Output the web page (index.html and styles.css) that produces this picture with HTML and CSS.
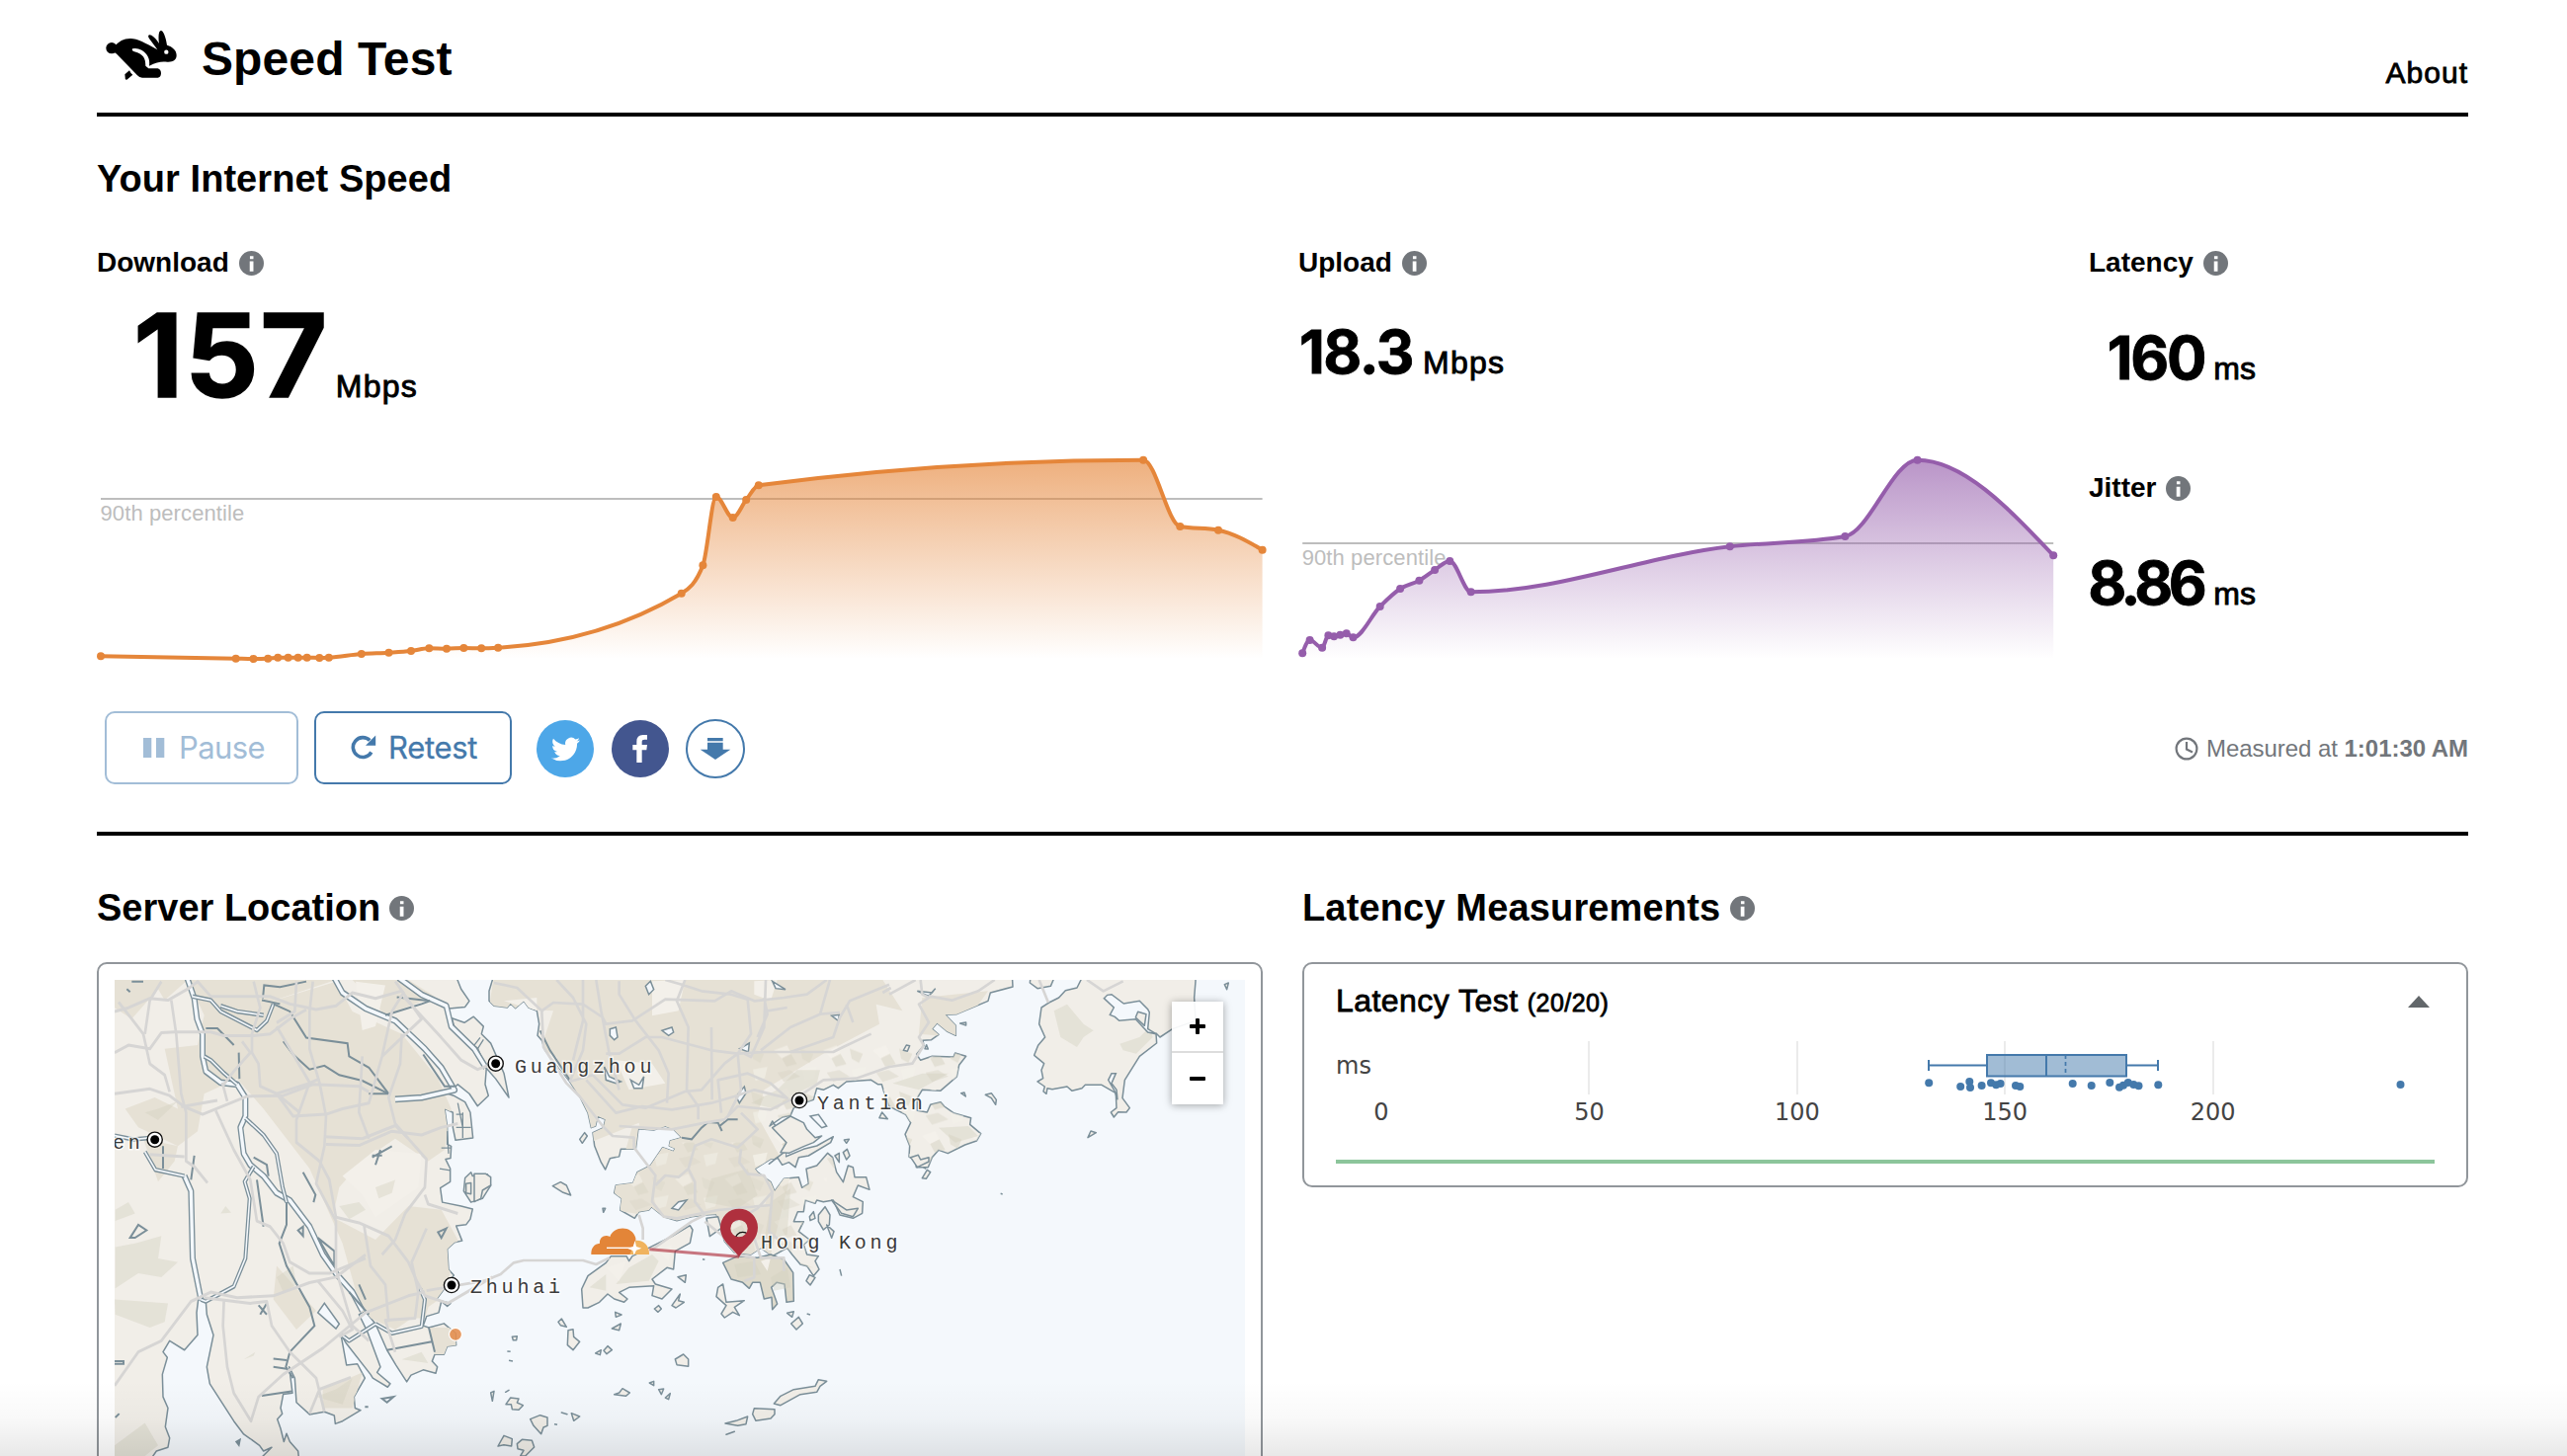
FILE: index.html
```html
<!DOCTYPE html>
<html lang="en">
<head>
<meta charset="utf-8">
<title>Speed Test</title>
<link rel="stylesheet" href="styles.css">
</head>
<body>
<svg width="0" height="0" class="defs">
  <symbol id="info" viewBox="0 0 24 24"><circle cx="12" cy="12" r="12" fill="#72767b"/><path d="M10.5 5h3.4v3h-3.4zM10.3 10.2h3.6V20h-3.6z" fill="#fff"/></symbol>
  <symbol id="city" viewBox="-9 -9 18 18"><circle r="7.6" fill="#fff" stroke="#111" stroke-width="1.4"/><circle r="4.5" fill="#000"/></symbol>
</svg>
<div class="page">
  <header class="header">
    <svg class="rabbit" viewBox="54 60 318 174">
      <circle cx="99" cy="116" r="17"/>
      <path d="M108 110C122 96 134 87 156 87C178 87 200 100 238 121L213 87C207 77 212 73 220 77Q232 84 243 102C241 86 241 70 245 65Q249 61 254 66C260 74 265 92 267 107C284 112 296 123 296 138C296 152 285 159 268 158C250 156 236 158 213 170C216 151 209 133 190 122Q176 115 162 118C160 122 162 125 168 127C196 134 202 148 202 170L211 178H239Q249 181 249 193Q248 206 239 206H192Q183 206 177 199L116 136Q112 132 108 130Z"/>
      <path d="M139 196L153 184Q156 192 163 197L145 212Q139 214 140 205Z"/>
      <circle cx="265" cy="128" r="6.5" fill="#fff"/>
    </svg>
    <h1 class="brand">Speed Test</h1>
    <a class="about">About</a>
  </header>

  <section class="speed">
    <h2 class="heading">Your Internet Speed</h2>
    <div class="metrics">
      <div class="metric">
        <div class="label">Download <svg class="info"><use href="#info"/></svg></div>
        <div class="value value-xl"><span class="num">157</span><span class="unit">Mbps</span></div>
        <svg class="chart chart-down" id="down" viewBox="98 450 1184 230"></svg>
      </div>
      <div class="metric">
        <div class="label">Upload <svg class="info"><use href="#info"/></svg></div>
        <div class="value value-up"><span class="num">18.3</span><span class="unit">Mbps</span></div>
        <svg class="chart chart-up" id="up" viewBox="1314 450 768 230"></svg>
      </div>
      <div class="metric metric-side">
        <div class="label">Latency <svg class="info"><use href="#info"/></svg></div>
        <div class="value value-lat"><span class="num">160</span><span class="unit">ms</span></div>
        <div class="label jitter">Jitter <svg class="info"><use href="#info"/></svg></div>
        <div class="value value-lat value-jit"><span class="num">8.86</span><span class="unit">ms</span></div>
      </div>
    </div>
    <div class="toolbar">
      <button class="btn btn-pause"><svg width="22" height="20" viewBox="0 0 22 20"><path d="M0 0h8.3v20H0zM13 0h8.3v20H13z"/></svg>Pause</button>
      <button class="btn btn-retest"><svg width="26" height="26" viewBox="0 0 26 26"><path d="M20.8 17.500A9.900 9.900 0 1 1 19.300 5.600" fill="none" stroke="#4479ab" stroke-width="3.600"/><path d="M25.2.6V10.8H15z"/></svg>Retest</button>
      <div class="social">
        <a class="round tw"><svg width="29" height="29" viewBox="0 0 24 24"><path fill="#fff" d="M23.953 4.57a10 10 0 01-2.825.775 4.958 4.958 0 002.163-2.723c-.951.555-2.005.959-3.127 1.184a4.92 4.92 0 00-8.384 4.482C7.69 8.095 4.067 6.13 1.64 3.162a4.822 4.822 0 00-.666 2.475c0 1.71.87 3.213 2.188 4.096a4.904 4.904 0 01-2.228-.616v.06a4.923 4.923 0 003.946 4.827 4.996 4.996 0 01-2.212.085 4.936 4.936 0 004.604 3.417 9.867 9.867 0 01-6.102 2.105c-.39 0-.779-.023-1.17-.067a13.995 13.995 0 007.557 2.209c9.053 0 13.998-7.496 13.998-13.985 0-.21 0-.42-.015-.63A9.935 9.935 0 0024 4.59z"/></svg></a>
        <a class="round fb"><svg width="58" height="58" viewBox="267 33 174 174"><path fill="#fff" d="M343 162V124H331V108H343V98Q343 78 362 78H375V92H367Q359 92 359 99V108H375L373 124H359V162Z"/></svg></a>
        <a class="round dl"><svg width="54" height="54" viewBox="501 39 162 162"><path fill="#4479ab" d="M558 87H605V97H558ZM558 101H605V122H628L582 153L536 122H558Z"/></svg></a>
      </div>
      <div class="measured"><svg width="24" height="24" viewBox="0 0 24 24"><circle cx="12" cy="12" r="10.4"/><path d="M12 5v7.5l6 3"/></svg><span>Measured at <b>1:01:30 AM</b></span></div>
    </div>
  </section>

  <hr class="rule">

  <section class="details">
    <div>
      <h2 class="heading">Server Location <svg class="info"><use href="#info"/></svg></h2>
      <div class="card map-card">
        <div class="map-box">
        <svg class="map" viewBox="116 992 1144 482">
          <defs>
            <pattern id="hills" width="150" height="130" patternUnits="userSpaceOnUse">
              <path d="M10 20L50 5L62 30L34 44Z" fill="#f6f3ec" opacity=".6"/>
              <path d="M34 44L62 30L80 62L48 70Z" fill="#d6d2c2" opacity=".5"/>
              <path d="M90 15L130 30L118 58L96 46Z" fill="#dcd8c9" opacity=".6"/>
              <path d="M96 78L140 70L132 104L104 112Z" fill="#f4f1ea" opacity=".6"/>
              <path d="M20 88L58 80L90 100L40 116Z" fill="#dad6c7" opacity=".5"/>
            </pattern>
            <clipPath id="mid-clip"><use href="#mid"/></clipPath>
            <clipPath id="west-clip"><use href="#west"/></clipPath>
          </defs>
          <rect x="116" y="992" width="1144" height="482" fill="#f4f8fc"/>

          <!-- western delta -->
          <g transform="translate(80 880) scale(.33333 .37879)">
            <path id="west" class="land" d="M90 280H1142L1160 320L1185 352L1172 368L1115 373L1130 420L1165 455L1210 490L1237 530L1233 575L1243 605L1210 633L1185 600L1150 575L1120 600L1140 606L1172 622L1188 650L1196 718L1143 724L1135 690L1135 650L1110 640L1118 690V735L1130 740L1128 772L1113 775L1127 800V835L1097 852L1103 890L1160 900L1195 908L1188 935L1175 950L1145 953L1163 993L1140 997L1118 1015L1122 1070L1138 1085L1110 1120L1085 1150L1128 1160L1118 1168L1100 1155L1092 1185L1055 1195L1045 1220L1062 1225L1108 1214L1143 1240L1145 1272L1118 1275L1108 1297L1080 1297L1072 1315L1088 1330L1083 1347L1045 1338L1008 1352L995 1370L962 1325L935 1285L900 1215L868 1180L850 1190L875 1235L915 1330L905 1345L945 1375L937 1384L892 1360L885 1350L812 1268L795 1243L812 1325L845 1322L868 1360L835 1410L838 1440L855 1446L800 1475L778 1482L775 1460L745 1450L700 1457L660 1425L655 1360L638 1330L648 1400L620 1403L612 1440L617 1455L602 1470L612 1495L622 1530L630 1508L640 1530L665 1555L668 1580H545L585 1545L560 1555L548 1540L520 1522L500 1510L470 1475L397 1375L388 1330L408 1245L388 1190L385 1155L362 1150L357 1185L360 1245L320 1285L275 1260L255 1290L268 1305L253 1350L255 1410L270 1440L262 1490L275 1520L270 1545L235 1555L215 1580H90Z"/>
            <g clip-path="url(#west-clip)">
              <path class="dark" d="M108 296H330L260 350L240 320L160 400L108 370ZM380 390L470 400L560 360L780 300L830 380L980 440L1090 560L1130 640L1110 750L1060 780L960 720L860 780L790 850L770 930L900 990L1000 900L1100 910L1150 990L1110 1140L960 1230L860 1190L800 1000L700 800L560 640L480 560L380 600L360 700L300 740L180 690L140 640L230 610L300 640L260 480L360 470ZM880 1000L1100 1060L1050 1200L900 1200ZM600 1060L720 1180L660 1230L590 1150ZM740 1390L860 1345L830 1440L740 1440ZM1062 1225H1145V1297H1080ZM330 296H780L560 360L470 400L380 390ZM830 296L1000 296L1080 340L930 390ZM195 720L300 740L290 780L240 835Z"/>
              <path class="pale" d="M840 300L930 310L900 420L860 430ZM800 820L900 750L1040 760L1030 850L900 930L860 870Z"/>
              <g class="shade">
                <path d="M790 900L850 890L870 910L820 935ZM900 850L960 830L950 865L910 880ZM200 650L240 640L300 620L240 670ZM110 910L150 890L170 920L110 940ZM110 1010L170 1000L250 980L240 1040L300 1050L250 1090L180 1080L110 1120ZM108 1150L270 1160L260 1210L215 1225L110 1190ZM600 1090L650 1060L660 1110L620 1130ZM720 1410L780 1390L830 1360L800 1430ZM108 1540L200 1480L240 1540L200 1568H108ZM430 920L445 900L462 918ZM500 1310L535 1290L530 1300ZM980 1310L1040 1290L1060 1320Z"/>
              </g>
            </g>
            <path class="land" d="M1132 398L1170 410L1198 394L1228 420L1222 440L1250 465L1290 545L1305 610L1265 560L1235 530L1210 478L1145 440Z"/>
            <path class="land" d="M1172 825L1190 810L1195 820L1240 815L1250 845L1225 880L1190 890L1168 860ZM1175 840L1190 838V868L1175 865Z"/>
            <path class="coast" d="M1145 655H1165M1145 690H1190M1165 650V718M1150 625L1165 690M1118 700L1122 760M1095 800L1127 805M1100 745H1130M1200 470L1218 450M1210 480L1228 455"/>

            <g class="river-edge">
              <path id="r1" d="M328 290L350 345L358 400L375 440V500L385 540L430 570L480 575L505 610V660L490 690L500 760L520 790L560 820L600 865L640 885L700 955L740 1030L780 1080L830 1130L860 1180"/>
              <path id="r3" d="M775 290L800 330L870 372L960 405L1050 480L1100 530L1140 590L1040 610L960 615"/>
              <path id="r4" d="M970 290L1040 335L1115 365L1130 420L1200 480L1235 530"/>
              <path id="r6" d="M320 820L340 860L345 1040L370 1150"/>
            </g>
            <g class="river-fill">
              <use href="#r1"/><use href="#r4"/><use href="#r6"/><use href="#r3"/>
            </g>
            <g class="stream-edge">
              <path id="r2" d="M345 340L400 350L430 380L540 430L570 405L590 360"/>
              <path id="r5" d="M505 665L560 710L600 760L618 850L630 890"/>
              <path id="r7" d="M108 712L165 722L215 718M200 755L232 803L320 820M370 1150L385 1155L470 1115L505 1040L518 880L503 835L530 795M900 1215L950 1240L1040 1222L1050 1150L1035 1120M795 1243L820 1260L900 1215M380 500L400 510L440 545L480 575M430 365L480 380L560 390"/>
            </g>
            <g class="stream-fill"><use href="#r2"/><use href="#r5"/><use href="#r7"/></g>
            <path class="water" d="M725 1185L745 1160L790 1215L780 1228Z"/>
            <path class="coast thick" d="M590 360L640 380L690 450L815 465L820 500L880 530L940 600L880 600M630 890V950L608 1000L630 1060L700 1170L715 1220L640 1290L628 1330L650 1360M255 740V800M350 765L340 830M935 1285L1075 1262M1062 1225L1080 1290"/>
            <path class="coast thick" d="M620 460L650 495L700 535L745 525L790 550L860 565L940 600M558 345L562 310L610 315L690 300M555 350L610 360M385 425H420L470 470M485 490L487 560M530 770L570 790L575 820M680 810L718 870L712 890M540 830L560 955M555 1407L645 1395M590 1330L630 1335M590 1308L630 1312M1045 495L1110 580L1140 580M965 342L1065 352L1040 360L930 390M725 985L775 1020V1060ZM820 1130L880 1190M850 1110L870 1150"/>
            <path class="coast thick" d="M890 770L950 740M900 790L915 750M890 765H920M155 985L180 950L205 965L170 985ZM545 1165L570 1190M550 1190L570 1160M1090 970L1115 960L1100 985ZM160 300H195M145 320L155 328M665 965L680 955V980ZM110 1465L122 1455M920 1415L955 1410L935 1425ZM868 1437H878M108 1315H135V1322H108M478 1530L488 1525L485 1538Z"/>
            <g class="road">
              <path d="M108 380L150 370L215 345L270 350L330 320L360 300L400 340H580L640 360L720 375L780 365L830 330L900 345L980 325"/>
              <path d="M108 490L150 470L215 480L250 437L290 435L400 435L440 445L530 445L580 440L640 400L690 375"/>
              <path d="M120 355L160 400L195 440L215 520L260 550L275 595M250 300L215 350L200 440"/>
              <path d="M280 350L295 440L310 600L325 650V780L350 795L390 838M108 600L215 587L275 605L320 635L375 655L510 607L620 605L710 575L850 580L880 595"/>
              <path d="M530 300L550 370L525 440V490L545 520L550 580L600 600L650 660L750 655L800 640L880 625L920 500L950 380L985 330L960 300M415 645L470 750L520 830L540 940L580 955L620 1000L640 1050L700 1080L760 1080L870 1040"/>
              <path d="M710 300L700 380L700 480L730 570L750 660L745 740L720 840L780 940L780 1070L830 1220L880 1260M600 420L660 510L700 570L660 670V730L730 780"/>
              <path d="M730 780L760 830L780 930L850 945L940 980L1000 1050L1025 1100L1050 1140L1120 1160L1255 1090"/>
              <path d="M745 715L860 720L960 685L1000 720L1055 775L1050 850L990 920L960 990L920 1030M750 735L850 738L950 700L1040 710L1100 690L1150 680M860 500L850 650L880 720"/>
              <path d="M980 440L975 520L940 610L960 680L1000 720M980 325L1040 400L920 500M985 340L1100 450L1160 510L1210 535L1240 525"/>
              <path d="M108 1380L180 1290L250 1260L340 1155L400 1130L480 1145L590 1140L700 1105L780 1090L870 1030"/>
              <path d="M440 1150L437 1220L450 1330L470 1400L522 1475L545 1410L620 1350L740 1280L870 1185L1000 1140L1050 1130M380 1145L520 1160L570 1155L585 1220L640 1290L720 1360L745 1450M700 1455L730 1390L825 1358M1055 960L1010 1050L1030 1130L1020 1200L930 1205L960 1290M865 950L885 1060L930 1110L940 1210M670 650L600 600L690 575L730 560"/>
              <path d="M660 300L655 380L600 410M725 1100L800 1180L830 1230L790 1250M310 635L420 618M435 570L450 620M495 460L520 490L470 540L435 580M215 762L320 768M1050 870L1060 895L1150 920"/>
            </g>
          </g>

          <!-- eastern shore and islands -->
          <g transform="translate(480 970) scale(.33333)">
            <path id="mid" class="land" d="M60 50L45 100L45 130L60 145L100 150L110 138L125 152L150 130L165 150L190 160L197 200L192 235L205 250L215 280L240 310L290 375L320 420L345 470L355 515L368 510L375 480L398 490L392 515L360 530L365 570L385 620L398 642L412 608L440 602L445 580L490 580L498 518L545 522L580 510L605 520L630 545L595 555L592 570L610 578L605 587L572 575L535 630L495 650L482 683L430 690L425 713L448 730L443 765L487 790L500 770L530 765L538 755L575 785L615 797L660 785L700 780L735 778L760 860L790 895L840 900L870 880L905 905L950 880L965 900L990 930L1010 935L1030 965L1047 945L1035 920L1045 905L1010 900L1000 870L1018 855L985 830L1000 800L970 800L982 770L1000 770L1005 735L1035 745L1040 735L1060 740L1090 735L1110 780L1150 790L1178 775L1180 740L1150 725L1165 690L1200 703L1190 665L1155 665L1150 635L1135 630L1120 680L1100 650L1088 605L1073 592L1040 630L1008 640L1015 685L995 697L985 665L940 670L912 708L900 680L860 650L852 640L900 610L945 605L950 565L905 495L897 510L935 483L960 478L970 455L1000 440L1030 430L1040 395L1060 400L1090 385L1105 395L1130 375L1205 370L1225 383H1237L1245 410L1260 450L1310 475L1325 500L1308 535L1322 570L1320 603L1340 615L1342 635L1378 635L1390 605L1410 583L1438 593L1490 567L1525 555L1538 533L1505 505L1508 485L1455 470L1427 450L1416 437L1385 445L1375 468L1345 463V425L1360 400L1415 403L1442 380L1465 360L1472 325L1493 298L1460 288L1455 300L1390 298L1355 310L1343 292L1365 265L1362 250L1388 248L1410 232L1390 215L1405 197L1435 222L1462 235V205L1430 172L1465 170L1560 130L1567 105L1635 87L1633 50Z"/>
            <g clip-path="url(#mid-clip)">
              <path class="dark" d="M60 50H1230L1300 160L1220 140L1230 200L1060 290L880 400L860 480L860 560L800 650L790 740L700 780L615 797L425 765V690L530 640L500 500L350 560L280 380L200 280L240 160L45 150ZM1360 120L1560 100L1460 240L1350 230Z"/>
              <path class="dark" d="M480 510L860 480L960 660L900 900H760L700 780L430 760V690Z"/>
              <path class="pale" d="M540 70L640 66L620 160L540 175ZM850 70L920 66L900 130L850 110ZM430 310L540 320L580 380L470 400ZM210 280L250 300L270 350L240 340ZM90 130L190 120L190 160Z"/>
              <rect x="840" y="250" width="720" height="400" fill="url(#hills)"/>
              <rect x="430" y="560" width="640" height="380" fill="url(#hills)" opacity=".8"/>
              <path class="shade" d="M840 440L920 400L980 340L1050 340L1040 380L960 420L920 460ZM720 670L830 640L860 720L800 760L700 740ZM900 740L960 700L950 840L880 860ZM1410 515L1500 510L1530 540L1460 560ZM1270 380L1360 350L1440 350L1350 400Z"/>
            </g>
            <path class="land" d="M945 603L1000 580L1040 570L1090 542L1082 560L1015 600L985 605L975 635L955 620L935 628L920 605L895 625L940 590L948 560"/>
            <path class="land" d="M960 480L1000 500L1010 520L1035 545L1055 540L1030 560L1000 572L955 592L930 590L948 560L905 515Z"/>

            <path class="land" d="M330 1062L326 1005L345 965L400 925L415 905H462L470 920L480 905L540 875L600 845L655 812L663 825L655 865L610 890L605 945L585 940L540 975L550 990L600 1005L570 1035L540 1025L545 995L470 1000L440 1015L465 1035L455 1045L425 1035L405 1020L380 1045L345 1062Z"/>
            <path class="land dk" d="M755 925L800 905L860 910L900 900L940 915L968 955L970 1042L948 1045L942 990L918 985L902 1000L920 1050L905 1067L903 1030L880 1035L868 985L845 985L835 1003L815 985L780 975Z"/>
            <path class="shade" d="M470 940L540 900L560 920L530 980L430 990ZM350 1000L400 960L400 1010ZM790 930L850 920L870 960L800 970ZM900 970L950 940L960 1000L910 1010Z"/>
            <path class="pale" d="M400 940L460 920L440 980ZM560 890L600 870L590 920ZM870 920L900 910L890 950Z"/>
            <path class="land" d="M735 1028L740 1000L755 990L765 1045L820 1040L790 1060L805 1085L785 1075L760 1092L750 1080L765 1055ZM705 790L740 785L750 820L715 845ZM0 655H35L50 665V690L25 705L20 730L0 740ZM238 692L262 680L280 690L293 720L270 712ZM255 1105L265 1095L280 1120L262 1115ZM285 1130L300 1127L302 1150L320 1165L300 1190L283 1175ZM115 1150L130 1148L128 1160L118 1160ZM368 1200L385 1190L382 1205ZM393 1192L405 1178L418 1190L402 1202ZM610 1218L635 1203L650 1218V1240L615 1235ZM425 1325L440 1320L450 1307L472 1320L460 1330ZM96 1355L110 1335L135 1338L130 1350L148 1358L135 1372L115 1370L112 1355ZM170 1400L200 1388L222 1395V1420L210 1425L203 1445L180 1420ZM295 1382L320 1392L302 1405ZM72 1482L90 1450L115 1460L113 1482L90 1478ZM130 1475L145 1462L175 1465L182 1485L155 1512H140L150 1495L132 1490ZM910 1353L930 1330L970 1310L1035 1300L1045 1280L1070 1285L1050 1300L1040 1318L990 1325L930 1358ZM845 1385L850 1367L912 1370V1385L900 1398L855 1405ZM762 1413L795 1405L830 1392L825 1415L800 1420ZM765 1447L790 1438ZM428 1075L447 1083L430 1090ZM418 1125L445 1110L440 1130ZM547 1065L560 1055L568 1065L558 1075ZM600 1055L625 1020L620 1040L637 1045L612 1062ZM618 968L643 962L640 985ZM1008 980L1018 962L1035 970L1020 993ZM950 1078L970 1073L965 1090ZM962 1110L985 1090L997 1110L978 1128ZM390 760H398L392 772ZM320 550L335 530L343 540L328 562ZM1095 600L1108 592V620ZM1120 590L1132 580L1140 600L1130 612ZM1123 552L1138 550L1130 562ZM1045 780L1065 755L1080 780L1078 810L1060 825L1045 800ZM1018 785L1030 770L1035 790L1020 797ZM1070 810L1092 830L1085 850ZM1325 605L1348 598L1355 612L1380 605V618L1345 635ZM1360 668L1375 643L1385 650L1372 670ZM1303 280L1312 264L1322 266L1315 283ZM1368 275L1373 263L1378 276ZM1475 198L1493 195V204ZM1552 415L1570 410L1585 430L1583 445L1570 425ZM1478 410L1488 408L1492 420ZM1863 545L1872 525L1888 530ZM1230 485L1238 468L1255 488ZM2278 80L2290 75L2285 95ZM532 1290L545 1285V1298ZM560 1310L575 1308L568 1325ZM580 1335L595 1322L590 1340ZM50 1320L60 1315L55 1345ZM95 1318L105 1312ZM265 1380L282 1385ZM1085 735L1130 765L1165 760L1150 785L1115 775ZM100 1194L110 1195M105 1222L117 1224M243 1415L252 1417M693 914L700 916M1010 1080L1020 1083M1110 945L1115 965M1598 715L1604 717M1363 635L1372 640"/>
            <path class="land" d="M1745 135L1775 120L1795 98L1830 90L1850 50H2190V70L2186 120L2190 190L2120 215L2082 240L2070 228L2072 258L2020 298L1975 370L1968 425L1990 455L1980 468L1955 467L1942 483L1933 468L1950 455L1948 410L1905 385H1855L1845 395L1815 403L1800 390L1755 398L1740 395L1737 412L1728 405L1732 390L1710 375L1727 365L1722 340L1730 320L1700 295L1712 265L1733 240L1715 200L1722 150ZM1690 50L1687 75L1710 92L1750 85L1765 50Z"/>
            <path class="shade" d="M1760 160L1800 140L1850 200L1880 220L1850 240L1830 270L1780 240ZM1960 260L2020 240L2050 210L2060 240L2010 290L1970 280Z"/>
            <path class="water" d="M1912 122L1922 112L1935 110L1972 138L2020 130L2045 155L2050 165L2045 215L2070 230L2045 225L2008 185L1958 190L1945 178L1930 172L1942 150ZM1925 370L1935 350L1948 350L1935 380L1950 400L1953 430L1945 405Z"/>
            <path class="land" d="M2008 180L2015 163L2040 170L2035 205Z"/>
            <path class="water" d="M412 215L430 210L435 240L425 248L412 235ZM570 220L600 210L605 225L590 235ZM520 85L535 70L545 95L530 110ZM806 275L835 258L832 285ZM795 420L820 390L825 410L805 440ZM395 330L410 360L445 375L430 380L400 370ZM475 370L500 385L515 360L510 395L485 395ZM1085 175L1108 172L1105 190ZM600 760L620 740L645 735L620 765ZM905 70L945 95L915 92ZM1020 480L1045 475L1070 510L1055 515ZM1345 100L1390 105L1400 92L1380 115Z"/>
            <path class="coast thick" d="M630 545L660 550L690 515L710 498L740 500L752 525M745 510L770 490L800 490M200 220L230 280L290 370"/>
            <g class="road">
              <path d="M60 75L130 90L205 160L210 270L280 380L320 420L390 510L420 540L485 545V575L550 660L540 740L575 785L615 790L740 765L900 750"/>
              <path d="M205 160L240 135L330 140L390 180L400 200L480 190L580 125L730 130L780 100L850 130L940 120L1010 110L1070 66M250 66L300 120L340 200L330 280L290 375M330 66L330 190L300 310M370 66L385 160L410 290L440 400M440 70V110L490 190L560 280L590 350L585 440"/>
              <path d="M290 375L360 355L450 445L520 455L640 405L690 400L760 320L800 290L880 285L1090 285L1120 270L1205 230M640 66L615 130L650 210L645 400L680 450V490M400 290L440 290L520 240L570 240L720 280L800 290M720 210L722 430M580 66L630 80L690 100L780 110L830 125L840 230L800 290L810 400L770 480"/>
              <path d="M340 370L430 470L510 450L600 460L720 440L790 420L850 400L950 425L900 380L830 350L740 370L750 470M440 510L600 520L700 500L760 490L800 450L900 460L1000 410L1060 370L1160 365L1260 330L1330 320L1365 265"/>
              <path d="M550 690L580 660L620 665L650 640L670 570L720 550L800 575L860 520L810 470M650 640L670 680V740L700 780L660 800L540 885M810 580L805 620L830 655L880 660L905 710L860 760L790 800M905 710L895 830L930 860M885 66L880 210L840 300L820 290M880 120L890 170L860 240M1080 66L1050 170L960 210L870 280M1260 80L1140 130L1110 180L1090 240L960 285M890 160L950 150M1050 170L1110 165M1130 140L1150 195"/>
              <path d="M1260 110L1340 66M1265 90L1240 105M1355 66L1360 110L1380 120L1350 140L1380 195L1350 240L1365 265M1380 115L1450 128L1530 100L1580 66M1715 66L1743 135M1860 66L1910 100L1970 70M500 780L512 820V855M700 800L750 840L800 900L850 910V970L820 980M850 850L870 910L940 910V950"/>
              <path d="M-145 1010L30 980L80 960L120 925L150 918H330L370 930L410 910"/>
            </g>
            <path d="M532 884L804 907" stroke="#af303e" stroke-opacity=".65" stroke-width="9"/>
          </g>

          <g class="place">
            <text x="114" y="1162.500">en</text>
            <text x="521" y="1085.500">Guangzhou</text>
            <text x="827" y="1122.500">Yantian</text>
            <text x="770" y="1263.500">Hong Kong</text>
            <text x="476" y="1308.500">Zhuhai</text>
          </g>
          <use href="#city" x="147.700" y="1144.700" width="18" height="18"/>
          <use href="#city" x="448" y="1292" width="18" height="18"/>
          <use href="#city" x="492.700" y="1067.700" width="18" height="18"/>
          <use href="#city" x="800" y="1105" width="18" height="18"/>
          <circle cx="751.700" cy="1255" r="7.600" fill="none" stroke="#111" stroke-width="1.400"/>
          <circle cx="461" cy="1350.800" r="6.500" fill="#e38a48" fill-opacity=".85" stroke="#fff" stroke-width="1.200"/>
          <g transform="translate(480 970) scale(.33333)">
            <path fill="#e38538" d="M355 900C354 880 364 868 381 866C379 848 396 838 412 846C422 812 480 810 490 850C492 870 488 886 480 900Z"/>
            <path fill="#f0b35e" d="M491 857C516 856 532 874 531 900H472Z"/>
            <path stroke="#fff" stroke-width="4" d="M402 880H480"/>
            <path fill="#fff" d="M488 858L492 876L508 881L492 887L485 902L481 888L466 882L482 876Z"/>
            <path fill="#af303e" fill-rule="evenodd" d="M804 908C790 882 747 860 747 818A57 57 0 0 1 861 818C861 860 818 882 804 908ZM804 795A26 26 0 1 0 804 847A26 26 0 1 0 804 795Z"/>
          </g>
        </svg>
        <div class="zoom"><span class="plus"></span><span class="minus"></span></div>
        </div>
      </div>
    </div>

    <div>
      <h2 class="heading heading-lat">Latency Measurements <svg class="info"><use href="#info"/></svg></h2>
      <div class="card latency-card">
        <div class="test-head"><div class="test-title">Latency Test <small>(20/20)</small></div><span class="caret"></span></div>
        <svg class="box" id="box" viewBox="1352 1044 1112 100"></svg>
        <div class="progress"></div>
      </div>
    </div>
  </section>
  <div class="fade"></div>
</div>
<script src="charts.js"></script>
</body>
</html>
```
FILE: styles.css
```css
* { box-sizing: border-box; }
body { margin: 0; background: #fff; color: #000; font-family: "Liberation Sans", Arial, sans-serif; }
.defs { position: absolute; }
.page { position: relative; width: 2598px; height: 1474px; overflow: hidden; padding: 0 100px 0 98px; background: #fff; }
h1, h2 { margin: 0; font-weight: 700; }
svg { display: block; flex: none; }

.header { display: flex; align-items: flex-start; height: 118px; border-bottom: 4px solid #000; padding-top: 30px; }
.rabbit { width: 106px; height: 58px; }
.brand { font-size: 48px; line-height: 60px; letter-spacing: .1px; }
.about { margin-left: auto; padding-top: 26px; font-size: 30px; line-height: 36px; letter-spacing: 1px; -webkit-text-stroke: .8px #000; }

.heading { display: flex; align-items: center; gap: 9px; font-size: 38px; line-height: 44px; height: 44px; white-space: nowrap; }
.speed .heading { margin-top: 41px; letter-spacing: .05px; }
.heading-lat { letter-spacing: .15px; gap: 10px; }
.info { width: 25px; height: 25px; }

.metrics { display: grid; grid-template-columns: 1216px 799px 385px; margin-top: 47px; }
.metric { display: flex; flex-direction: column; height: 430px; }
.metric-side { padding-left: 1px; }
.label { display: flex; align-items: center; gap: 10px; height: 32px; font-size: 28px; font-weight: 700; line-height: 34px; }
.value { display: flex; align-items: baseline; white-space: nowrap; }
.num { font-family: Inter, Roboto, sans-serif; font-weight: 700; }
.unit { font-size: 32px; line-height: 32px; letter-spacing: 1.200px; -webkit-text-stroke: .9px #000; }
.value-xl { height: 120px; margin-top: 18px; padding-left: 37px; gap: 7px; }
.value-xl .num { font-size: 117px; line-height: 120px; letter-spacing: 1.500px; -webkit-text-stroke: 1.500px #000; }
.value-up { height: 60px; margin-top: 44px; padding-left: 1px; gap: 10px; }
.value-up .num, .value-lat .num { font-size: 60px; line-height: 60px; letter-spacing: -1.500px; -webkit-text-stroke: .8px #000; }
.value-lat { width: 169px; height: 60px; margin-top: 50px; justify-content: flex-end; gap: 9px; }
.value-lat .num { letter-spacing: -2.200px; }
.value-jit .num { letter-spacing: -4.500px; }
.value-jit { gap: 11px; }
.value-lat .unit { letter-spacing: 0; }
.jitter { margin-top: 86px; }
.chart { margin-top: auto; overflow: visible; height: 230px; }
.chart-down { width: 1184px; }
.chart-up { width: 768px; }
.chart text { font-size: 22px; fill: #bdbdbd; letter-spacing: .1px; }

.toolbar { display: flex; align-items: center; height: 74px; margin-top: 40px; padding-left: 8px; }
.btn { display: flex; align-items: center; height: 74px; border: 2px solid #4479ab; border-radius: 10px; background: #fff; color: #4479ab; fill: #4479ab; padding: 0 0 0 37px; font: 400 31px/36px Inter, sans-serif; letter-spacing: -.3px; }
.btn-pause { width: 196px; gap: 14px; border-color: #a2bdd7; color: #a2bdd7; fill: #a2bdd7; letter-spacing: -.6px; }
.btn-retest { width: 200px; gap: 12px; margin-left: 16px; padding-left: 35px; -webkit-text-stroke: .3px #4479ab; }
.social { display: flex; gap: 18px; margin-left: 25px; padding-top: 2px; }
.round { display: flex; align-items: center; justify-content: center; width: 58px; height: 58px; border-radius: 50%; }
.tw { background: #4da7e8; }
.fb { background: #43568f; }
.dl { width: 60px; height: 60px; margin: -1px; border: 2.500px solid #4479ab; }
.measured { display: flex; align-items: center; gap: 8px; margin-left: auto; padding-top: 1px; font-size: 24px; line-height: 28px; letter-spacing: -.04px; color: #72767b; }
.measured svg { fill: none; stroke: #72767b; stroke-width: 2.200; }
.rule { height: 4px; margin: 48px 0 0; border: 0; background: #000; }

.details { display: grid; grid-template-columns: 1180px 1180px; gap: 40px; margin-top: 51px; }
.card { margin-top: 33px; border: 2px solid #91969b; border-radius: 10px; }
.map-card { height: 540px; padding: 16px; }
.map-box { position: relative; width: 1144px; }
.map { width: 1144px; height: 482px; }
.zoom { position: absolute; top: 22px; right: 22px; width: 52px; height: 104px; display: grid; grid-template-rows: 1fr 1fr; background: rgba(255, 255, 255, .92); box-shadow: 0 1px 8px rgba(0, 0, 0, .35); }
.zoom span { display: flex; align-items: center; justify-content: center; position: relative; }
.plus { border-bottom: 2px solid #ddd; }
.zoom span::before { content: ""; width: 16px; height: 4px; border-radius: 1px; background: #000; }
.zoom .plus::after { content: ""; position: absolute; width: 4px; height: 16px; border-radius: 1px; background: #000; }

.land { fill: #f1eee8; stroke: #7b8f99; stroke-width: 1.500px; vector-effect: non-scaling-stroke; stroke-linejoin: round; }
.dk { fill: #dedacb; }
.dark { fill: #e6e1d5; }
.pale { fill: #f3f0ea; }
.shade { fill: #d3cfbd; opacity: .4; }
.water { fill: #f4f8fc; stroke: #7b8f99; stroke-width: 1.500px; vector-effect: non-scaling-stroke; }
.coast { fill: none; stroke: #7b8f99; stroke-width: 1.300px; vector-effect: non-scaling-stroke; }
.thick { stroke-width: 2px; }
.road path { fill: none; stroke: #d6d5d4; stroke-width: 8; stroke-linejoin: round; }
.river-edge, .river-fill, .stream-edge, .stream-fill { fill: none; stroke-linejoin: round; }
.river-edge { stroke: #7b8f99; stroke-width: 18; }
.river-fill { stroke: #f4f8fc; stroke-width: 10; }
.stream-edge { stroke: #7b8f99; stroke-width: 12; }
.stream-fill { stroke: #f4f8fc; stroke-width: 4.500; }
.place text { font: 20px "Liberation Mono", monospace; letter-spacing: 3.800px; fill: #3a3a3a; stroke: rgba(255, 255, 255, .7); stroke-width: 3px; paint-order: stroke; }

.latency-card { height: 228px; padding: 0 32px; }
.test-head { display: flex; justify-content: space-between; height: 70px; padding-top: 17px; }
.test-title { font-size: 32px; line-height: 40px; letter-spacing: .45px; -webkit-text-stroke: .8px #000; }
.test-title small { font-size: 25px; }
.caret { width: 22px; height: 12px; margin: 15px 5px 0 0; background: #62676a; clip-path: polygon(50% 0, 100% 100%, 0 100%); }
.box { width: 1112px; height: 100px; margin-top: -2px; }
.box text { font: 24px Verdana, "DejaVu Sans", sans-serif; fill: #444; text-anchor: middle; }
.progress { height: 4px; margin-top: 30px; background: #8cc59b; }
.fade { position: absolute; left: 0; right: 0; bottom: 0; height: 76px; background: linear-gradient(rgba(0, 0, 0, 0), rgba(0, 0, 0, .025) 50%, rgba(0, 0, 0, .09)); }
```
FILE: charts.js
```js
// Monotone cubic interpolation through the samples.
function curve(p) {
  const n = p.length, m = [];
  const s = i => (p[i + 1][1] - p[i][1]) / (p[i + 1][0] - p[i][0]);
  for (let i = 1; i < n - 1; i++) {
    const h0 = p[i][0] - p[i - 1][0], h1 = p[i + 1][0] - p[i][0];
    const s0 = s(i - 1), s1 = s(i), q = (s0 * h1 + s1 * h0) / (h0 + h1);
    m[i] = (Math.sign(s0) + Math.sign(s1)) * Math.min(Math.abs(s0), Math.abs(s1), 0.5 * Math.abs(q));
  }
  m[0] = (3 * s(0) - m[1]) / 2;
  m[n - 1] = (3 * s(n - 2) - m[n - 2]) / 2;
  let d = `M${p[0]}`;
  for (let i = 0; i < n - 1; i++) {
    const h = (p[i + 1][0] - p[i][0]) / 3;
    d += `C${p[i][0] + h},${p[i][1] + h * m[i]} ${p[i + 1][0] - h},${p[i + 1][1] - h * m[i + 1]} ${p[i + 1]}`;
  }
  return d;
}

function area(id, color, y90, pts) {
  const d = curve(pts), x0 = pts[0][0], x1 = pts[pts.length - 1][0];
  document.getElementById(id).innerHTML =
    `<linearGradient id="g-${id}" gradientUnits="userSpaceOnUse" x1="0" x2="0" y1="464" y2="667">
       <stop offset="0" stop-color="${color}" stop-opacity=".66"/><stop offset="1" stop-color="${color}" stop-opacity="0"/></linearGradient>
     <path d="M${x0} ${y90}H${x1}" stroke="#bdbdbd" stroke-width="2"/>
     <text x="${x0 - 0.5}" y="${y90 + 22}">90th percentile</text>
     <path d="${d}V667H${x0}Z" fill="url(#g-${id})"/>
     <path d="${d}" fill="none" stroke="${color}" stroke-width="4" stroke-linejoin="round"/>` +
    pts.map(p => `<circle cx="${p[0]}" cy="${p[1]}" r="4" fill="${color}"/>`).join('');
}

area('down', '#e5863a', 505, [[102, 664.3], [238.7, 666.7], [256.5, 667], [271.2, 666.7], [281.2, 665.7], [291.6, 665.7], [301.6, 665.7], [310.7, 665.7], [323.3, 666], [332.8, 665.7], [365.8, 662], [393.5, 660.7], [416, 659], [434.3, 656.3], [452, 656.7], [469.4, 656], [487.2, 656.3], [504.1, 655.7], [689.7, 600.7], [711.4, 572.3], [724.8, 503], [741.7, 524], [755.2, 506], [767.8, 491.3], [1157.1, 465.7], [1194.3, 533], [1233, 536.7], [1277.6, 556.7]]);
area('up', '#955dab', 550, [[1318.2, 661.3], [1325.6, 648], [1338.1, 655.7], [1344.4, 643.3], [1350.1, 644.3], [1356.4, 642.7], [1362.7, 641.3], [1369.5, 645.3], [1396.7, 614], [1417.1, 596], [1436.4, 587.7], [1452.1, 577], [1467.3, 568], [1488.7, 599.3], [1750.8, 553.3], [1867.4, 543], [1940.6, 465.7], [2078.2, 562.3]]);

// Box plot of the latency samples.
const dots = [[1952.2, 1096.3], [1984.2, 1100], [1993.3, 1095], [1994, 1101], [2005.6, 1099], [2015, 1096.3], [2020.2, 1098.3], [2024.6, 1097], [2040, 1099], [2044.3, 1100], [2097.7, 1097], [2116.7, 1099], [2135.3, 1096], [2145, 1100.7], [2149, 1098.7], [2153.8, 1096], [2159.4, 1098], [2164.5, 1099.3], [2184.3, 1098.3], [2429.5, 1098]];
const tickX = v => 1398 + v * 4.208;
document.getElementById('box').innerHTML =
  [50, 100, 150, 200].map(v => `<path d="M${Math.round(tickX(v))} 1054V1108" stroke="#ebebeb" stroke-width="2"/>`).join('') +
  [0, 50, 100, 150, 200].map(v => `<text x="${tickX(v)}" y="1134">${v}</text>`).join('') +
  `<text x="1370" y="1087">ms</text>
   <g fill="none" stroke="#4479ab" stroke-width="2">
     <rect x="2011" y="1068" width="141" height="21.500" fill="#4479ab" fill-opacity=".5"/>
     <path d="M2071 1068V1090M1952 1078.500H2011M2152 1078.500H2184M1952 1073V1084M2184 1073V1084"/>
     <path d="M2090.500 1068V1090" stroke-dasharray="4 3" stroke-width="1.700"/>
   </g>` +
  dots.map(p => `<circle cx="${p[0]}" cy="${p[1]}" r="4" fill="#4479ab"/>`).join('');
```
